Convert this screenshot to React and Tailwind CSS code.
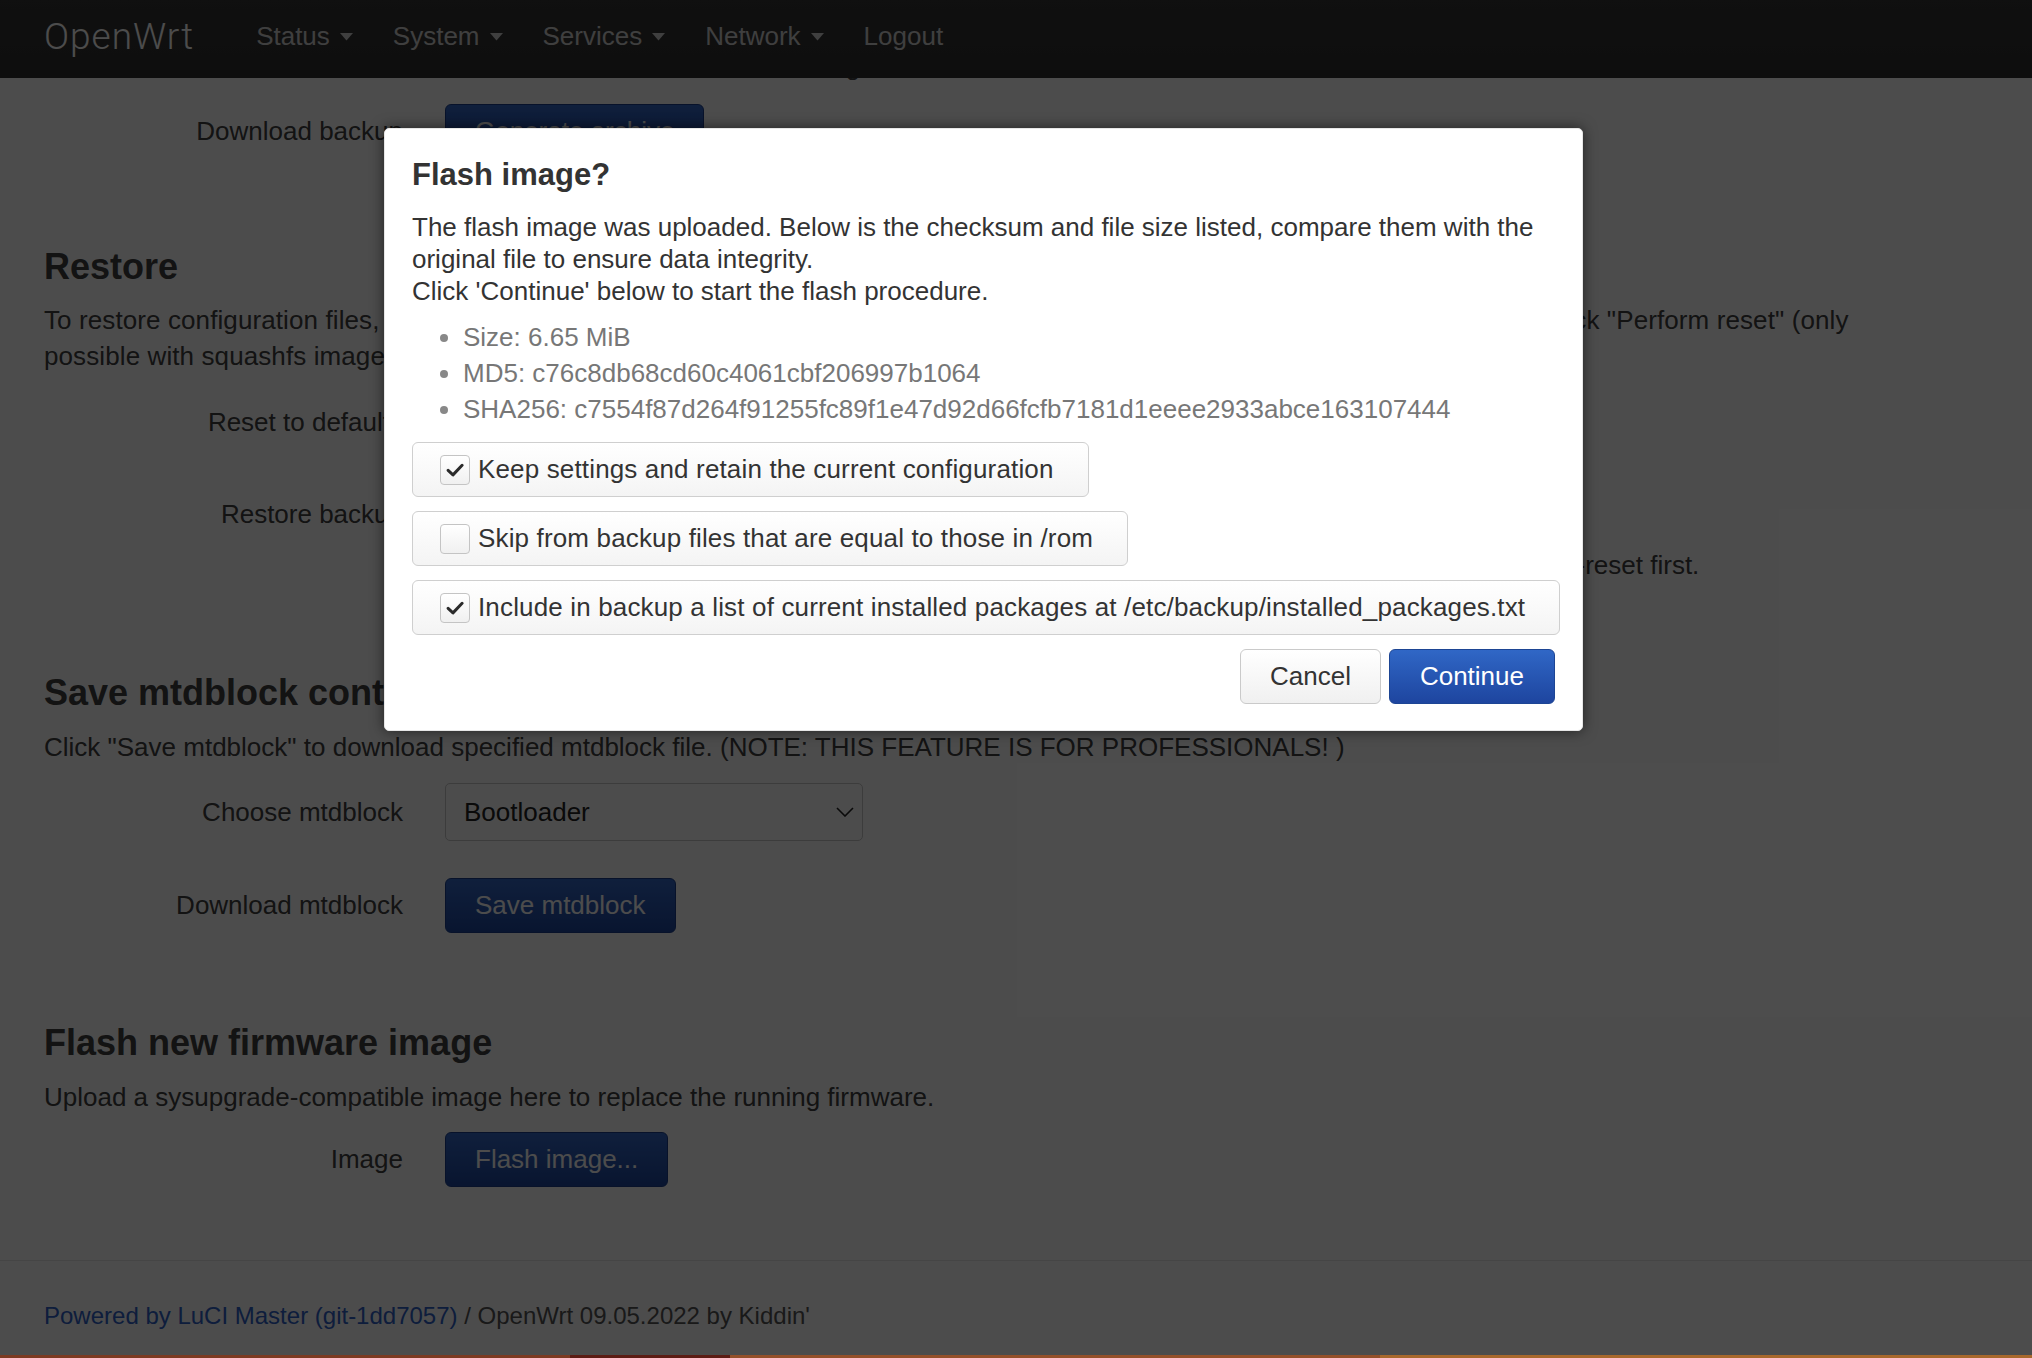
import React from "react";

const menu = ["Status", "System", "Services", "Network"];

const Caret = () => (
  <svg className="ml-[10px] h-[8px] w-[13px]" viewBox="0 0 13 8">
    <path d="M0 0h13L6.5 7.5z" fill="currentColor" />
  </svg>
);

const Check = () => (
  <svg className="h-[14px] w-[18px]" viewBox="0 0 17 13" fill="none">
    <path d="M2 6.8l4.6 4.3L15.2 2" stroke="#2a2a2a" strokeWidth="2.8" strokeLinecap="round" strokeLinejoin="round" />
  </svg>
);

const BlueButton = ({ children }) => (
  <button className="flex h-[55px] items-center rounded-[6px] border border-[#1b3f8e] bg-linear-to-b from-[#3569c9] to-[#1f479f] px-[29px] text-white">
    {children}
  </button>
);

const Row = ({ label, className = "", children }) => (
  <div className={`flex items-center ${className}`}>
    <div className="w-[359px] shrink-0 text-right">{label}</div>
    <div className="ml-[42px]">{children}</div>
  </div>
);

const Option = ({ checked, children }) => (
  <label className="flex h-[55px] w-fit items-center rounded-[6px] border border-[#cfcfcf] bg-linear-to-b from-white to-[#f4f4f4] pl-[27px] pr-[34px]">
    <span className="flex h-[30px] w-[30px] items-center justify-center rounded-[4px] border border-[#c4c4c4] bg-linear-to-b from-white to-[#f0f0f0]">
      {checked && <Check />}
    </span>
    <span className="ml-[8px] whitespace-nowrap tracking-[0.15px]">{children}</span>
  </label>
);

export default function App() {
  return (
    <div className="flex h-[1358px] flex-col overflow-hidden font-['Liberation_Sans',Arial,sans-serif]">
      <div className="relative h-[1355px] overflow-hidden bg-white text-[26px] text-[#404040]">
        {/* page content, scrolled under the fixed header */}
        <main className="px-[44px] pt-[48px]">
          <p className="leading-[36px]">
            Click "Generate archive" to download a tar archive of the current configuration files.
          </p>
          <Row label="Download backup" className="mt-[20px]">
            <BlueButton>Generate archive</BlueButton>
          </Row>

          <h2 className="mt-[88px] text-[36px] font-bold leading-[40px]">Restore</h2>
          <p className="mt-[15px] leading-[36px] tracking-[0.1px]">
            To restore configuration files, you can upload a previously generated backup archive here. To reset the firmware to its initial state, click "Perform reset" (only
            <br />
            possible with squashfs images).
          </p>
          <Row label="Reset to defaults" className="mt-[21px]">
            <button className="flex h-[55px] items-center rounded-[6px] border border-[#a52a20] bg-linear-to-b from-[#d6473b] to-[#b32b20] px-[29px] text-white">
              Perform reset
            </button>
          </Row>
          <Row label="Restore backup" className="mt-[37px]">
            <BlueButton>Upload archive...</BlueButton>
          </Row>
          <p className="ml-[445px] mt-[5px] leading-[36px]">
            Custom files (certificates, scripts) may remain on the system. To prevent this, perform a factory-reset first.
          </p>

          <h2 className="mt-[90px] text-[36px] font-bold leading-[40px]">Save mtdblock contents</h2>
          <p className="mt-[16px] leading-[36px]">
            Click "Save mtdblock" to download specified mtdblock file. (NOTE: THIS FEATURE IS FOR PROFESSIONALS! )
          </p>
          <Row label="Choose mtdblock" className="mt-[18px]">
            <div className="flex h-[58px] w-[418px] items-center justify-between rounded-[5px] border border-[#c8c8c8] bg-white pl-[18px] pr-[8px] text-[#222]">
              <span>Bootloader</span>
              <svg className="h-[10px] w-[18px]" viewBox="0 0 18 10" fill="none">
                <path d="M1 1l8 8 8-8" stroke="#222" strokeWidth="1.6" />
              </svg>
            </div>
          </Row>
          <Row label="Download mtdblock" className="mt-[37px]">
            <BlueButton>Save mtdblock</BlueButton>
          </Row>

          <h2 className="mt-[90px] text-[36px] font-bold leading-[40px]">Flash new firmware image</h2>
          <p className="mt-[16px] leading-[36px]">
            Upload a sysupgrade-compatible image here to replace the running firmware.
          </p>
          <Row label="Image" className="mt-[17px]">
            <BlueButton>Flash image...</BlueButton>
          </Row>
        </main>

        <footer className="mt-[73px] border-t border-[#e8e8e8] px-[44px] pt-[37px] text-[24px] leading-[36px] text-[#555]">
          <a className="text-[#2f62c9]">Powered by LuCI Master (git-1dd7057)</a> / OpenWrt 09.05.2022 by Kiddin'
        </footer>

        {/* fixed header */}
        <header className="absolute inset-x-0 top-0 flex h-[78px] items-center bg-linear-to-b from-[#363636] to-[#2f2f2f] pb-[5px]">
          <span className="ml-[44px] font-['Roboto',sans-serif] text-[37px] font-light tracking-[1px] text-white">
            OpenWrt
          </span>
          <nav className="ml-[62px] flex items-center gap-[40px] text-[26px] text-[#d4d4d4]">
            {menu.map((m) => (
              <span key={m} className="flex items-center">
                {m}
                <Caret />
              </span>
            ))}
            <span>Logout</span>
          </nav>
        </header>

        {/* modal overlay */}
        <div className="absolute inset-0 bg-black/70" />

        <div className="absolute left-[384px] top-[128px] w-[1199px] rounded-[5px] border border-[#e6e6e6] bg-white px-[27px] pb-[26px] pt-[28px] text-[#333] shadow-[0_0_14px_rgba(0,0,0,0.55)]">
          <h4 className="text-[31px] font-bold leading-[36px]">Flash image?</h4>
          <p className="mt-[18px] leading-[32px]">
            The flash image was uploaded. Below is the checksum and file size listed, compare them with the
            <br />
            original file to ensure data integrity.
            <br />
            Click 'Continue' below to start the flash procedure.
          </p>
          <ul className="mt-[12px] list-disc pl-[51px] leading-[36px] text-[#777] marker:text-[#888]">
            <li>Size: 6.65 MiB</li>
            <li>MD5: c76c8db68cd60c4061cbf206997b1064</li>
            <li>SHA256: c7554f87d264f91255fc89f1e47d92d66fcfb7181d1eeee2933abce163107444</li>
          </ul>
          <div className="mt-[15px] flex flex-col gap-[14px]">
            <Option checked>Keep settings and retain the current configuration</Option>
            <Option>Skip from backup files that are equal to those in /rom</Option>
            <Option checked>Include in backup a list of current installed packages at /etc/backup/installed_packages.txt</Option>
          </div>
          <div className="mt-[14px] flex justify-end gap-[8px]">
            <button className="flex h-[55px] items-center rounded-[6px] border border-[#cacaca] bg-linear-to-b from-white to-[#f0f0f0] px-[29px] text-[#333]">
              Cancel
            </button>
            <button className="flex h-[55px] items-center rounded-[6px] border border-[#1d4594] bg-linear-to-b from-[#3067c6] to-[#1e459f] px-[30px] text-white">
              Continue
            </button>
          </div>
        </div>
      </div>
      <div className="flex h-[3px]">
        <div className="w-[570px] bg-[#7c3a22]" />
        <div className="w-[160px] bg-[#5c1c14]" />
        <div className="w-[650px] bg-[#94502a]" />
        <div className="flex-1 bg-[#a8682c]" />
      </div>
    </div>
  );
}
